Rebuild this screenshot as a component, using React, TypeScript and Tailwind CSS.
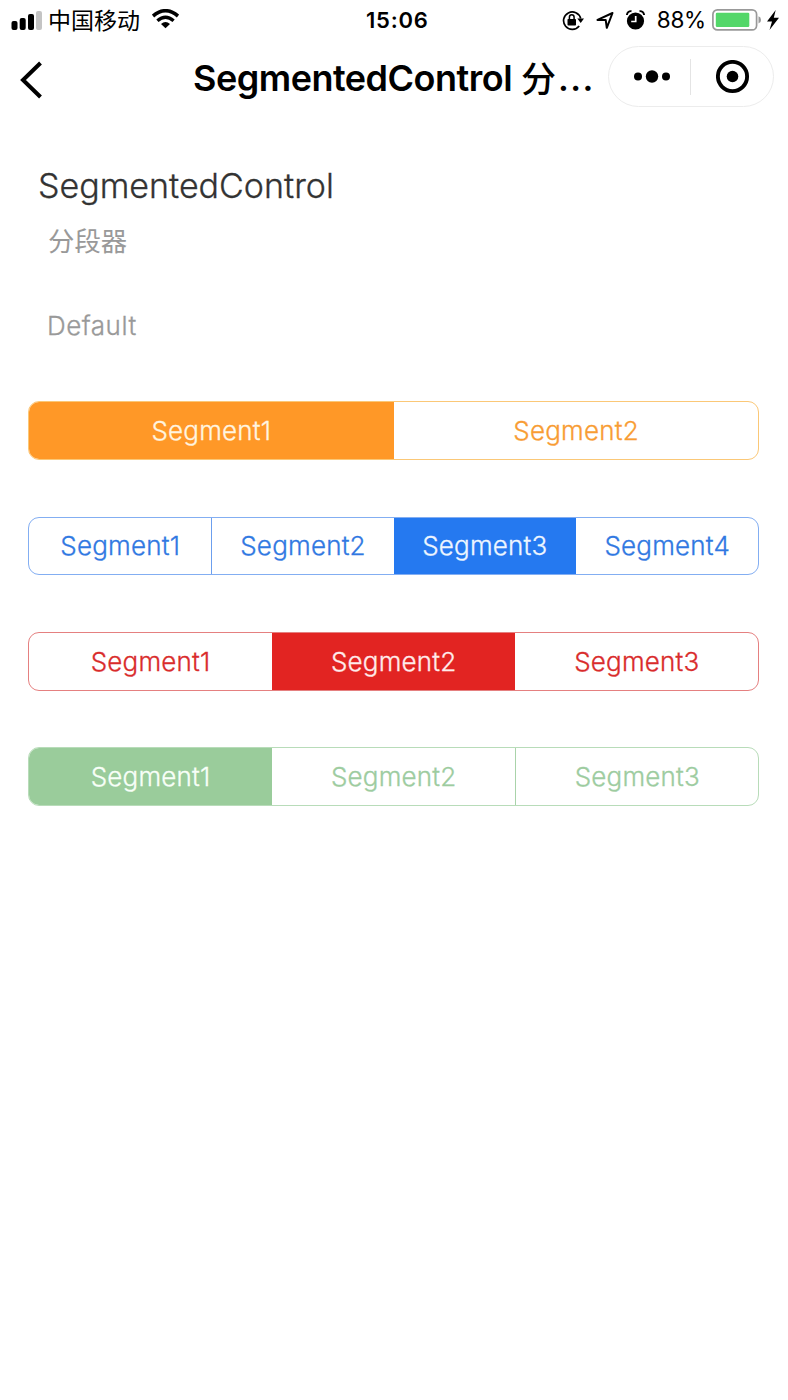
import React from "react";

type Tone = { frame: string; active: string; idle: string; divider: string };

const tones: Record<string, Tone> = {
  orange: { frame: "border-[#fbc877]", active: "bg-[#ff9827] text-[#fff5e0]", idle: "text-[#f89c33]", divider: "border-[#fbc877]" },
  blue: { frame: "border-[#83aef2]", active: "bg-[#2579f0] text-[#eef6ff]", idle: "text-[#3078e2]", divider: "border-[#6c9fee]" },
  red: { frame: "border-[#e58080]", active: "bg-[#e22422] text-[#ffeceb]", idle: "text-[#d92b2b]", divider: "border-[#e58080]" },
  green: { frame: "border-[#b8dcb9]", active: "bg-[#9acc9b] text-[#f8fff8]", idle: "text-[#9dcc9f]", divider: "border-[#a9d3aa]" },
};

function SegmentedControl({ count, selected, tone }: { count: number; selected: number; tone: string }) {
  const t = tones[tone];
  return (
    <div className={`grid h-[58.67px] auto-cols-fr grid-flow-col overflow-hidden rounded-[11px] border ${t.frame}`}>
      {Array.from({ length: count }, (_, i) => {
        const divided = i > 0 && i !== selected && i - 1 !== selected;
        return (
          <div
            key={i}
            className={`flex items-center justify-center text-[26px] font-light tracking-[0.2px] [-webkit-text-stroke:0.3px] ${
              i === selected ? t.active : t.idle
            } ${divided ? `border-l ${t.divider}` : ""}`}
          >
            Segment{i + 1}
          </div>
        );
      })}
    </div>
  );
}

function StatusBar() {
  return (
    <div className="flex h-10 items-center">
      <div className="flex flex-1 items-center pl-[11px]">
        <svg width="31" height="19" viewBox="0 0 31 19">
          <rect x="0.5" y="10" width="6" height="9" rx="2" />
          <rect x="8.7" y="7" width="6" height="12" rx="2" />
          <rect x="17" y="3" width="6" height="16" rx="2" />
          <rect x="25" y="0" width="6" height="19" rx="2" fill="#c4c4c4" />
        </svg>
        <span className="ml-[6px] mt-[2px] text-[23px] leading-none">中国移动</span>
        <svg className="ml-[12px] mt-[-2px]" width="27" height="20" viewBox="0 0 27 20">
          <path d="M1 7 Q13.500 -3.500 26 7" fill="none" stroke="#000" strokeWidth="3.600" />
          <path d="M5.400 11.700 Q13.500 4.800 21.600 11.700" fill="none" stroke="#000" strokeWidth="3.400" />
          <path d="M9 15 Q13.500 11 18 15 L13.500 19.300Z" />
        </svg>
      </div>
      <span className="w-[58px] whitespace-nowrap text-[22px] font-semibold tracking-[0.8px]">15:06</span>
      <div className="flex flex-1 items-center justify-end pr-[9px]">
        <svg width="22" height="21" viewBox="0 0 22 21">
          <path d="M17.200 15.900 A8.700 8.700 0 1 1 18.700 8.500" fill="none" stroke="#000" strokeWidth="1.700" />
          <path d="M15.300 8.500 H22 L18.700 13Z" />
          <rect x="5.500" y="9" width="8.500" height="6.500" rx="0.800" />
          <path d="M7.400 10 V7.200 a2.350 2.350 0 0 1 4.700 0 V10" fill="none" stroke="#000" strokeWidth="1.500" />
        </svg>
        <svg className="ml-[12px]" width="18" height="19" viewBox="0 0 18 19">
          <path d="M1.500 8.900 L16.500 2 L10.800 16.800 L9.700 8.900Z" fill="none" stroke="#000" strokeWidth="2" strokeLinejoin="round" />
        </svg>
        <svg className="ml-[12px] mt-[-1px]" width="19" height="20" viewBox="0 0 19 20">
          <circle cx="9.500" cy="11" r="8.600" />
          <path d="M0.900 5 A4 4 0 0 1 5.500 1.200" fill="none" stroke="#000" strokeWidth="1.900" />
          <path d="M13.500 1.200 A4 4 0 0 1 18.100 5" fill="none" stroke="#000" strokeWidth="1.900" />
          <path d="M9.700 6 V11.500 H5.200" fill="none" stroke="#fff" strokeWidth="1.700" />
        </svg>
        <span className="ml-[12px] text-[22.5px] leading-none tracking-[-0.2px]">88%</span>
        <svg className="ml-[6px] mt-[-1px]" width="50" height="22" viewBox="0 0 50 22">
          <rect x="0.900" y="0.900" width="43.700" height="20" rx="4.500" fill="#fff" stroke="#999" strokeWidth="1.700" />
          <rect x="3.800" y="3.700" width="33.500" height="14.300" rx="1.300" fill="#53d769" />
          <path d="M46.500 7.200 Q49 8 49 10.900 Q49 13.800 46.500 14.600Z" fill="#999" />
        </svg>
        <svg className="ml-[5px] mt-[-1px]" width="12" height="20" viewBox="0 0 12 20">
          <path d="M8.700 0 L0 11.500 H5 L2.500 20 L12 7.700 H6.800Z" />
        </svg>
      </div>
    </div>
  );
}

function NavBar() {
  return (
    <div className="flex h-[76px] items-start">
      <svg className="ml-[19px] mt-[21px] shrink-0" width="24" height="38" viewBox="0 0 24 38">
        <path d="M21.500 2 L4 19 L21.500 36" fill="none" stroke="#000" strokeWidth="4" />
      </svg>
      <h1 className="ml-[150px] flex h-[76px] w-[415px] shrink-0 items-center whitespace-nowrap text-[36px] font-semibold">
        <span className="tracking-[-0.5px]">SegmentedControl</span>
        <span className="ml-[9px] mt-[2px] text-[35px] font-medium">分</span>
        <span className="ml-[2px] text-[34px] font-semibold tracking-[1.4px]">...</span>
      </h1>
      <div className="mt-[6px] flex h-[61px] w-[166px] items-center rounded-full border border-[#ececec]">
        <svg className="ml-[24px]" width="38" height="14" viewBox="0 0 38 14">
          <circle cx="5" cy="6.500" r="4" />
          <circle cx="19" cy="6.500" r="6.200" />
          <circle cx="33" cy="6.500" r="4" />
        </svg>
        <div className="ml-[19px] h-[36px] w-px bg-[#e4e4e4]" />
        <svg className="ml-[25px]" width="34" height="34" viewBox="0 0 34 34">
          <circle cx="16.500" cy="16.500" r="14.600" fill="none" stroke="#000" strokeWidth="3.900" />
          <circle cx="16.500" cy="16.500" r="5.800" />
        </svg>
      </div>
    </div>
  );
}

export default function App() {
  return (
    <div className="h-[1400px] w-[788px] overflow-hidden bg-white font-['Inter','Noto_Sans_CJK_SC',sans-serif] text-black">
      <StatusBar />
      <NavBar />
      <main className="pt-[46px]">
        <h2 className="pl-[38px] text-[34px] font-light leading-[48px] text-[#333] [-webkit-text-stroke:0.3px]">SegmentedControl</h2>
        <p className="mt-[11px] pl-[48px] text-[26.4px] font-normal leading-[40px] text-[#999]">分段器</p>
        <p className="mt-[45px] pl-[47px] text-[26px] font-light leading-[40px] tracking-[0.5px] text-[#999] [-webkit-text-stroke:0.3px]">Default</p>
        <div className="ml-[28px] mt-[55.3px] flex w-[731.4px] flex-col gap-[56.66px]">
          <SegmentedControl tone="orange" count={2} selected={0} />
          <SegmentedControl tone="blue" count={4} selected={2} />
          <SegmentedControl tone="red" count={3} selected={1} />
          <SegmentedControl tone="green" count={3} selected={0} />
        </div>
      </main>
    </div>
  );
}
